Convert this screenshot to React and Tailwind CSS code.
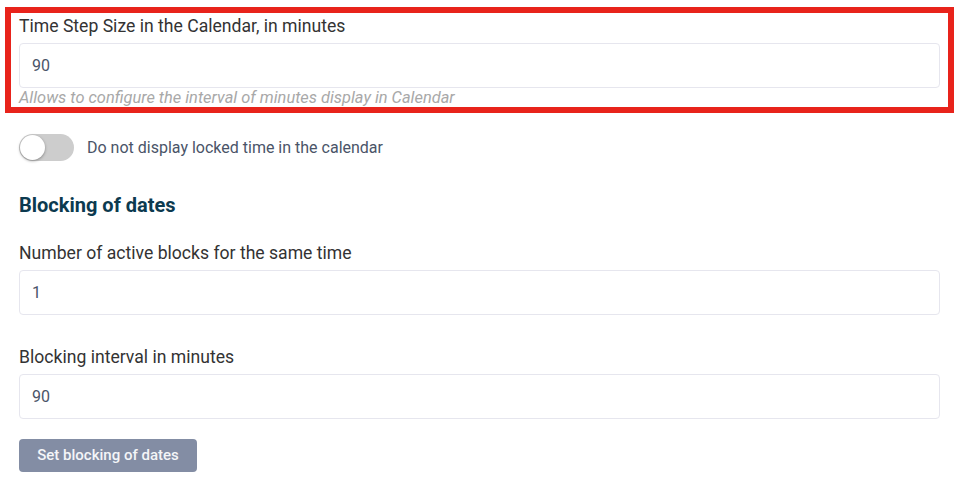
import React from 'react';

function Field({ label, value }) {
  return (
    <div>
      <label className="block text-[17.6px] leading-[26px] font-normal text-[#333333]">{label}</label>
      <div className="mt-[4px] h-[45px] rounded-[4px] border border-[#e6e6ee] bg-white flex items-center px-[12px] text-[16px] text-[#4a5468]">
        {value}
      </div>
    </div>
  );
}

export default function App() {
  return (
    <div
      className="w-[959px] h-[484px] bg-white px-[19px] pt-[7px] overflow-hidden"
      style={{ fontFamily: 'Roboto, "Liberation Sans", sans-serif' }}
    >
      {/* Highlighted setting */}
      <div className="-mx-[14px] border-[6px] border-[#e8231b] px-[8px]">
        <Field label="Time Step Size in the Calendar, in minutes" value="90" />
        <p className="text-[16.4px] leading-[19px] italic text-[#a8a8a8]">
          Allows to configure the interval of minutes display in Calendar
        </p>
      </div>

      {/* Toggle */}
      <div className="mt-[21px] flex items-center">
        <div className="relative w-[55px] h-[27px] rounded-full bg-[#cdcdcd]">
          <div className="absolute left-[1px] top-[1px] w-[25px] h-[25px] rounded-full bg-white shadow-[0_1px_3px_rgba(0,0,0,0.35)]"></div>
        </div>
        <span className="ml-[13px] text-[16px] text-[#4a5468]">Do not display locked time in the calendar</span>
      </div>

      <h3 className="mt-[30px] text-[20px] leading-[28px] font-bold text-[#0c3a4f]">Blocking of dates</h3>

      <div className="mt-[21px]">
        <Field label="Number of active blocks for the same time" value="1" />
      </div>
      <div className="mt-[29px]">
        <Field label="Blocking interval in minutes" value="90" />
      </div>

      <button className="mt-[20px] h-[33px] w-[178px] rounded-[4px] bg-[#838da4] text-[15px] font-medium text-[#f4f5f8]">
        Set blocking of dates
      </button>
    </div>
  );
}
